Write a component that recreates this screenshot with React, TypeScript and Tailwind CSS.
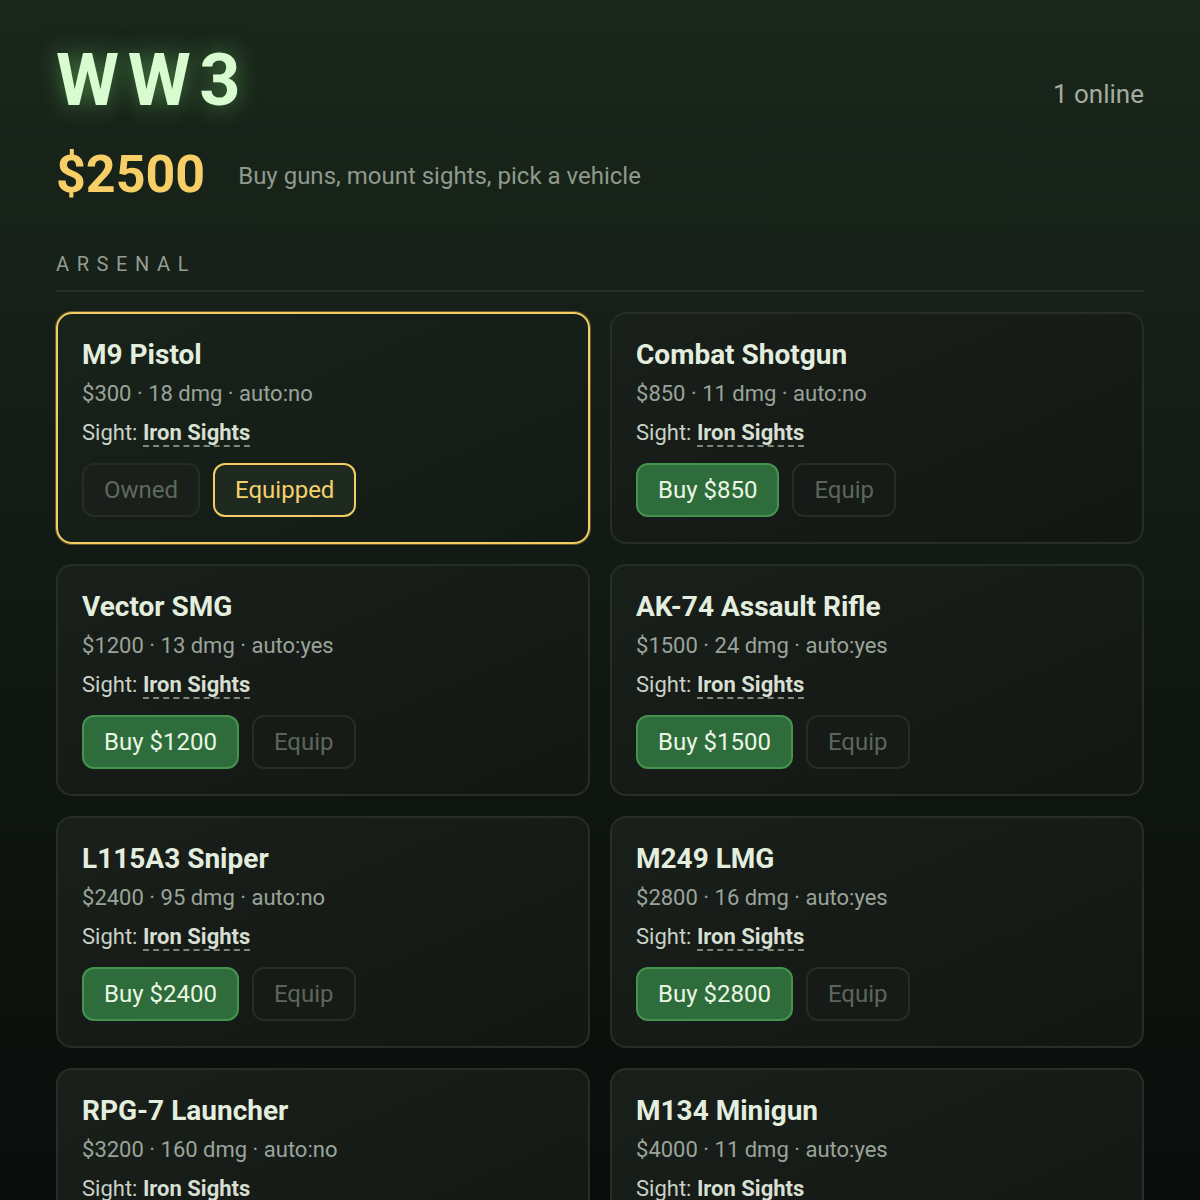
import React from "react";

type Gun = {
  name: string;
  price: number;
  dmg: number;
  auto: boolean;
  owned?: boolean;
  equipped?: boolean;
};

const guns: Gun[] = [
  { name: "M9 Pistol", price: 300, dmg: 18, auto: false, owned: true, equipped: true },
  { name: "Combat Shotgun", price: 850, dmg: 11, auto: false },
  { name: "Vector SMG", price: 1200, dmg: 13, auto: true },
  { name: "AK-74 Assault Rifle", price: 1500, dmg: 24, auto: true },
  { name: "L115A3 Sniper", price: 2400, dmg: 95, auto: false },
  { name: "M249 LMG", price: 2800, dmg: 16, auto: true },
  { name: "RPG-7 Launcher", price: 3200, dmg: 160, auto: false },
  { name: "M134 Minigun", price: 4000, dmg: 11, auto: true },
];

const GunCard = ({ gun }: { gun: Gun }) => {
  return (
    <div
      className={`rounded-2xl border-2 px-6 pt-[25px] pb-[25px] bg-gradient-to-br ${
        gun.equipped
          ? "border-[#f3cc63] from-[#18231a] to-[#131a14] shadow-[0_0_0_1px_rgba(243,204,99,0.35)]"
          : "border-[#262e27] from-[#191f1a] to-[#131714]"
      }`}
    >
      <div className="text-[28px] leading-[32px] font-bold text-[#e4eedf]">{gun.name}</div>
      <div className="mt-[9px] text-[22px] leading-[28px] text-[#9aa49a]">
        ${gun.price} · {gun.dmg} dmg · auto:{gun.auto ? "yes" : "no"}
      </div>
      <div className="mt-[11px] text-[22px] leading-[28px] text-[#c9d2c6]">
        Sight:{" "}
        <span className="font-bold text-[#d6dfd2] border-b-2 border-dashed border-[#7d877c]">
          Iron Sights
        </span>
      </div>
      <div className="mt-4 flex gap-[13px]">
        {gun.owned ? (
          <button className="h-[54px] px-5 rounded-xl border-2 border-[#252c26] bg-[#1a1f1b] text-[24px] text-[#5f695f]">
            Owned
          </button>
        ) : (
          <button className="h-[54px] px-5 rounded-xl border-2 border-[#44934f] bg-[#2e6c3b] text-[24px] text-[#eaf7e4]">
            Buy ${gun.price}
          </button>
        )}
        {gun.equipped ? (
          <button className="h-[54px] px-5 rounded-xl border-2 border-[#f3cc63] bg-[#1e2a20] text-[24px] text-[#f5d06c]">
            Equipped
          </button>
        ) : (
          <button className="h-[54px] px-5 rounded-xl border-2 border-[#262d27] bg-[#161b17] text-[24px] text-[#5c665c]">
            Equip
          </button>
        )}
      </div>
    </div>
  );
};

export default function App() {
  return (
    <div
      className="h-[1200px] overflow-hidden bg-gradient-to-b from-[#1a271c] via-[#111913] to-[#0a0d0b] px-14 pt-[37px]"
      style={{ fontFamily: "Roboto, 'Noto Sans', sans-serif" }}
    >
      <div className="flex items-center justify-between">
        <h1 className="text-[72px] leading-[88px] font-bold tracking-[0.12em] text-[#d8fccf] [text-shadow:0_0_22px_rgba(120,220,110,0.5)]">
          WW3
        </h1>
        <div className="text-[26px] text-[#a3ad9f] mt-[26px]">1 online</div>
      </div>

      <div className="mt-[18px] flex items-center gap-[33px]">
        <div className="text-[52px] leading-[64px] font-bold text-[#f8cf67]">$2500</div>
        <div className="text-[24px] text-[#8e9a8c] mt-[2px]">Buy guns, mount sights, pick a vehicle</div>
      </div>

      <div className="mt-[42px] text-[20px] tracking-[0.38em] text-[#939c91]">ARSENAL</div>
      <div className="mt-[11px] h-[2px] bg-[#263027]" />

      <div className="mt-5 grid grid-cols-2 gap-5">
        {guns.map((g) => (
          <GunCard key={g.name} gun={g} />
        ))}
      </div>
    </div>
  );
}
